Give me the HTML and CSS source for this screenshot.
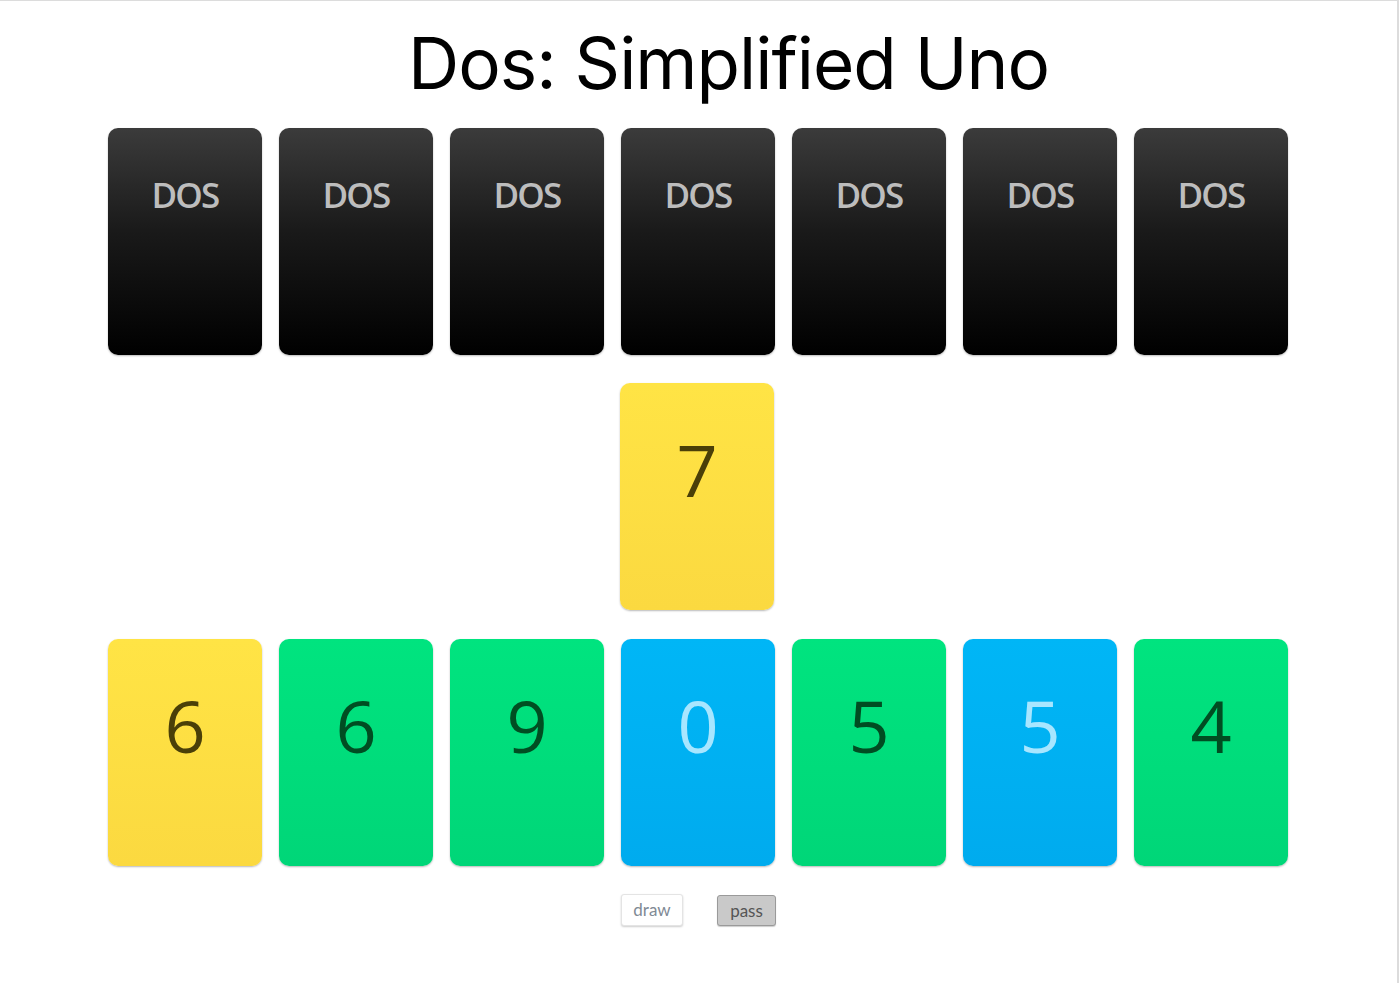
FILE: index.html
```html
<!DOCTYPE html>
<html>
<head>
<meta charset="utf-8">
<title>Dos: Simplified Uno</title>
<link rel="stylesheet" href="styles.css">
</head>
<body>
<div class="frame">
  <h1 class="title">Dos: Simplified Uno</h1>
  <div class="row row-opponent">
    <div class="card card-back"><span class="back-label">DOS</span></div>
    <div class="card card-back"><span class="back-label">DOS</span></div>
    <div class="card card-back"><span class="back-label">DOS</span></div>
    <div class="card card-back"><span class="back-label">DOS</span></div>
    <div class="card card-back"><span class="back-label">DOS</span></div>
    <div class="card card-back"><span class="back-label">DOS</span></div>
    <div class="card card-back"><span class="back-label">DOS</span></div>
  </div>
  <div class="row row-pile">
    <div class="card card-yellow pile-card"><span class="num">7</span></div>
  </div>
  <div class="row row-hand">
    <div class="card card-yellow"><span class="num">6</span></div>
    <div class="card card-green"><span class="num">6</span></div>
    <div class="card card-green"><span class="num">9</span></div>
    <div class="card card-blue"><span class="num">0</span></div>
    <div class="card card-green"><span class="num">5</span></div>
    <div class="card card-blue"><span class="num">5</span></div>
    <div class="card card-green"><span class="num">4</span></div>
  </div>
  <div class="actions">
    <button class="btn btn-draw">draw</button>
    <button class="btn btn-pass">pass</button>
  </div>
</div>
</body>
</html>
```

FILE: styles.css
```css
html, body {
  margin: 0;
  padding: 0;
  background: #fff;
}

.frame {
  box-sizing: border-box;
  width: 1399px;
  height: 983px;
  border-top: 1px solid #dcdcdc;
  border-right: 2px solid #dcdcdc;
  overflow: hidden;
}

.title {
  margin: 0;
  padding: 19px 0 0 60px;
  height: 105px;
  box-sizing: border-box;
  text-align: center;
  font-family: "Inter", "Lato", sans-serif;
  font-weight: 400;
  font-size: 71px;
  line-height: 86px;
  letter-spacing: -1px;
  color: #000;
}

.row {
  display: flex;
  justify-content: center;
  gap: 17px;
  padding-right: 1px;
}

.row-opponent {
  margin-top: 22px;
}

.row-pile {
  margin-top: 28px;
  padding-right: 3px;
}

.row-hand {
  margin-top: 29px;
}

.card {
  box-sizing: border-box;
  width: 154px;
  height: 227px;
  border-radius: 10px;
  display: flex;
  justify-content: center;
  box-shadow: 0 1px 2px rgba(0, 0, 0, 0.28);
}

.card-back {
  background: linear-gradient(to bottom, #3b3b3b 0%, #1a1a1a 45%, #000 100%);
  padding-top: 45px;
}

.back-label {
  font-family: "Open Sans", "Noto Sans", sans-serif;
  font-weight: 600;
  font-size: 35px;
  line-height: 44px;
  letter-spacing: -1.8px;
  color: #bdbdbd;
}

.card-yellow {
  background: linear-gradient(to bottom, #ffe445 0%, #fbd940 100%);
}

.card-green {
  background: linear-gradient(to bottom, #00e47f 0%, #00d678 100%);
}

.card-blue {
  background: linear-gradient(to bottom, #00b6f6 0%, #00abee 100%);
}

.card .num {
  font-family: "Open Sans", "Noto Sans", sans-serif;
  font-weight: 400;
  font-size: 72px;
  line-height: 80px;
  padding-top: 46px;
}

.card-yellow .num { color: #4a3f08; }
.card-green .num { color: #004d22; }
.card-blue .num { color: #a8e6ff; }

.actions {
  display: flex;
  justify-content: center;
  gap: 34px;
  margin-top: 28px;
}

.btn {
  box-sizing: border-box;
  height: 32px;
  padding: 0 4px;
  border-radius: 3px;
  font-family: "Lato", "Inter", sans-serif;
  font-size: 17px;
  line-height: 28px;
  cursor: pointer;
}

.btn-draw {
  background: #fff;
  border: 1px solid #e4e4e4;
  box-shadow: 0 1px 2px rgba(0, 0, 0, 0.2);
  color: #7f8a95;
  width: 62px;
}

.btn-pass {
  background: #c9c9c9;
  border: 1px solid #9a9a9a;
  box-shadow: 0 1px 1px rgba(0, 0, 0, 0.2);
  color: #555;
  width: 59px;
  height: 31px;
  margin-top: 1px;
}
```
